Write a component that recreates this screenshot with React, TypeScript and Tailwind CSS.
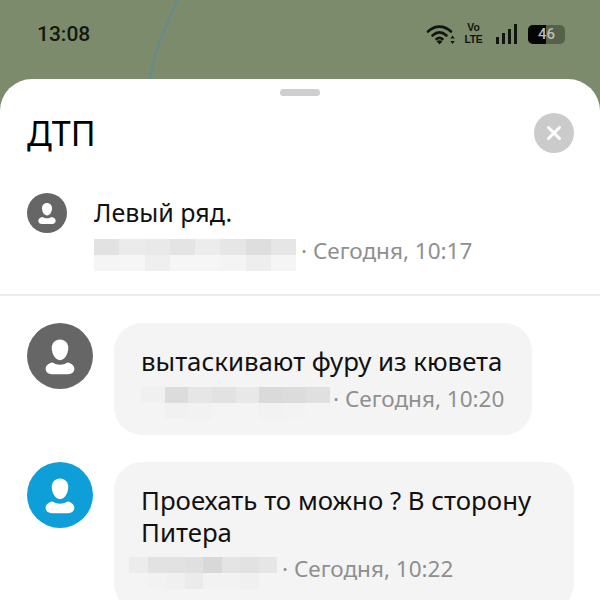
import React from "react";

const font = "font-['Noto_Sans','Liberation_Sans',sans-serif]";

function UserIcon({ className }: { className: string }) {
  return (
    <svg viewBox="0 0 40 40" className={className}>
      <path d="M20 10c3.1 0 5 2.3 5 5.2 0 3.3-2 7.3-5 7.3s-5-4-5-7.3c0-2.9 1.9-5.2 5-5.2z" fill="#fff" />
      <path d="M15.5 24c1.4.9 3 1.3 4.5 1.3s3.1-.4 4.5-1.3c2.4.4 4.2 1.9 4.2 3.7 0 2-1.6 3.3-3.7 3.3H15c-2.1 0-3.7-1.3-3.7-3.3 0-1.8 1.8-3.3 4.2-3.7z" fill="#fff" />
    </svg>
  );
}

function Avatar({ size, color }: { size: "sm" | "lg"; color: string }) {
  return (
    <div
      className={`flex shrink-0 items-center justify-center rounded-full ${size === "sm" ? "h-10 w-10" : "h-[66px] w-[66px]"} ${color}`}
    >
      <UserIcon className="h-full w-full" />
    </div>
  );
}

// censored name: two rows of faint pixel blocks
function Blurred({ top, bottom, className }: { top: string[]; bottom: string[]; className: string }) {
  return (
    <div className={`flex translate-y-[4px] flex-col ${className}`}>
      {[top, bottom].map((row, i) => (
        <div key={i} className="flex h-4">
          {row.map((c, j) => (
            <div key={j} className="h-full flex-1" style={{ backgroundColor: c }} />
          ))}
        </div>
      ))}
    </div>
  );
}

function StatusIcons() {
  return (
    <div className="flex items-center text-[#11150f]">
      <svg viewBox="0 0 30 22" className="h-[22px] w-[30px]">
        <g fill="none" stroke="currentColor" strokeWidth="2.6" strokeLinecap="round">
          <path d="M2 8.5C9 2 18 2 25 8.5" />
          <path d="M6.5 12.5c4.5-4 9.5-4 14 0" />
          <path d="M10.5 16c2-1.6 4-1.6 6 0" />
        </g>
        <path d="M13.5 21.5l-3-3.2c2-1.3 4-1.3 6 0z" fill="currentColor" />
        <path d="M26.5 12.5l2.2 3h-4.4zM26.5 21l-2.2-3h4.4z" fill="currentColor" />
      </svg>
      <div className="ml-[8px] flex w-[19px] flex-col items-center font-['Liberation_Sans',sans-serif] text-[10.4px] leading-[12px] font-bold">
        <span>Vo</span>
        <span className="tracking-[-0.3px]">LTE</span>
      </div>
      <div className="ml-[13px] flex h-5 items-end gap-[3px]">
        <div className="h-[7px] w-[3px] bg-current" />
        <div className="h-[11px] w-[3px] bg-current" />
        <div className="h-[15px] w-[3px] bg-current" />
        <div className="h-5 w-[3px] bg-current" />
      </div>
      <div className="relative ml-[11px] flex h-[19px] w-[37px] overflow-hidden rounded-[5px] bg-[#56614a]">
        <div className="h-full w-[18px] bg-[#050505]" />
        <span className="absolute inset-0 text-center font-['Roboto',sans-serif] text-[15px] leading-[19px] font-medium text-[#b9bdb3]">
          46
        </span>
      </div>
    </div>
  );
}

export default function App() {
  return (
    <div className={`relative flex h-[600px] w-[600px] flex-col overflow-hidden bg-[#7b8b6b] ${font}`}>
      <svg viewBox="0 0 600 90" className="absolute top-0 left-0 h-[90px] w-[600px]">
        <path d="M177 0C168 24 154 48 150 80" fill="none" stroke="#5f8b92" strokeWidth="1.5" />
      </svg>

      <div className="relative flex h-[79px] shrink-0 items-start justify-between pt-[22px] pr-[35px] pl-[37px]">
        <span className="font-['Roboto',sans-serif] text-[21px] leading-6 font-medium text-[#14180f]">13:08</span>
        <StatusIcons />
      </div>

      <div className="relative flex-1 rounded-t-[32px] bg-white">
        <div className="flex justify-center pt-[10px]">
          <div className="h-[7px] w-10 rounded-full bg-[#cfcfcf]" />
        </div>

        <div className="mt-[16px] flex items-center justify-between pr-[26px] pl-[27px]">
          <h1 className="text-[34px] leading-[42px] font-normal text-black">ДТП</h1>
          <button className="flex h-10 w-10 items-center justify-center rounded-full bg-[#cbcbcb]">
            <svg viewBox="0 0 16 16" className="h-4 w-4">
              <path d="M2.5 2.5l11 11M13.5 2.5l-11 11" stroke="#fff" strokeWidth="3" strokeLinecap="round" />
            </svg>
          </button>
        </div>

        <div className="mt-[39px] flex border-b-2 border-[#ececec] pb-[27px] pl-[27px]">
          <Avatar size="sm" color="bg-[#666666]" />
          <div className="ml-[27px] flex-1 pt-[2px]">
            <p className="text-[25px] leading-[34px] text-[#111]">Левый ряд.</p>
            <div className="mt-[6px] flex items-center">
              <Blurred
                className="w-[202px]"
                top={["#e2e2e2", "#ebebeb", "#e9e9e9", "#e4e4e4", "#ececec", "#e6e6e6", "#dedede", "#e6e6e6"]}
                bottom={["#f5f5f5", "#f6f6f6", "#efefef", "#f6f6f6", "#f6f6f6", "#f4f4f4", "#eeeeee", "#f5f5f5"]}
              />
              <span className="ml-[5px] text-[22.5px] leading-8 text-[#8f8f8f]">· Сегодня, 10:17</span>
            </div>
          </div>
        </div>

        <div className="mt-[27px] flex flex-col gap-[27px] pl-[27px]">
          <div className="flex">
            <Avatar size="lg" color="bg-[#666666]" />
            <div className="ml-[21px] h-[112px] w-[418px] rounded-[28px] bg-[#f4f4f4] pt-[21px] pl-[27px]">
              <p className="text-[25.8px] leading-[34px] text-[#111]">вытаскивают фуру из кювета</p>
              <div className="mt-[5px] flex items-center">
                <Blurred
                  className="w-[189px]"
                  top={["#f0f0f0", "#dcdcdc", "#e6e6e6", "#e2e2e2", "#e8e8e8", "#dadada", "#dcdcdc", "#e0e0e0"]}
                  bottom={["#f4f4f4", "#f1f1f1", "#f2f2f2", "#f4f4f4", "#f4f4f4", "#f2f2f2", "#f3f3f3", "#f4f4f4"]}
                />
                <span className="ml-[3px] text-[22.5px] leading-6 text-[#8f8f8f]">· Сегодня, 10:20</span>
              </div>
            </div>
          </div>

          <div className="flex">
            <Avatar size="lg" color="bg-[#0f9fd8]" />
            <div className="ml-[21px] h-[150px] w-[460px] rounded-[28px] bg-[#f4f4f4] pt-[22px] pl-[27px]">
              <p className="text-[25.8px] leading-[32px] text-[#111]">Проехать то можно ? В сторону Питера</p>
              <div className="mt-[5px] flex items-center">
                <Blurred
                  className="-ml-[12px] w-[148px]"
                  top={["#ececec", "#e2e2e2", "#e2e2e2", "#e0e0e0", "#d8d8d8", "#e4e4e4", "#e2e2e2", "#e6e6e6"]}
                  bottom={["#f4f4f4", "#f2f2f2", "#f0f0f0", "#ebebeb", "#f2f2f2", "#f2f2f2", "#f0f0f0", "#f4f4f4"]}
                />
                <span className="ml-[5px] text-[22.5px] leading-6 text-[#8f8f8f]">· Сегодня, 10:22</span>
              </div>
            </div>
          </div>
        </div>
      </div>
    </div>
  );
}
